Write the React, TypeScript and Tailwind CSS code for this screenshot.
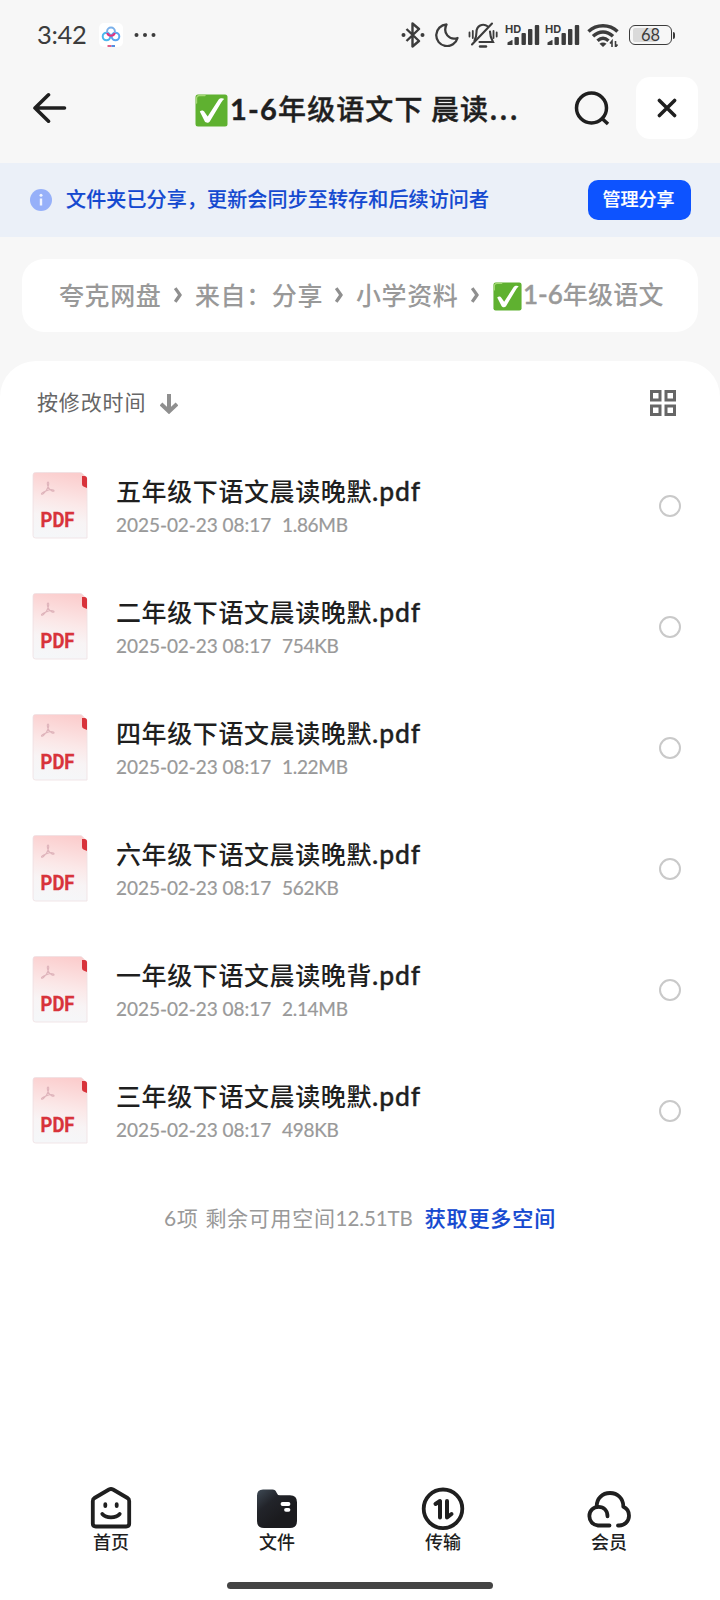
import type { ReactNode } from "react";

type FileItem = {
  name: string;
  date: string;
  size: string;
};

const files: FileItem[] = [
  { name: "五年级下语文晨读晚默", date: "2025-02-23 08:17", size: "1.86MB" },
  { name: "二年级下语文晨读晚默", date: "2025-02-23 08:17", size: "754KB" },
  { name: "四年级下语文晨读晚默", date: "2025-02-23 08:17", size: "1.22MB" },
  { name: "六年级下语文晨读晚默", date: "2025-02-23 08:17", size: "562KB" },
  { name: "一年级下语文晨读晚背", date: "2025-02-23 08:17", size: "2.14MB" },
  { name: "三年级下语文晨读晚默", date: "2025-02-23 08:17", size: "498KB" },
];

const CheckMark = ({ className }: { className: string }) => (
  <svg viewBox="0 0 33 33" className={className}>
    <rect x="0.5" y="0.5" width="32" height="32" rx="2.5" fill="#5fb130" />
    <path d="M1.5 9V4.5a3 3 0 0 1 3-3H10" fill="none" stroke="#a5d975" strokeWidth="1.4" strokeLinecap="round" />
    <path d="M4.8 17.5c1.8-1.7 3.7-1.2 4.7.4l3.2 4.5L23.5 5.8c1.2-1.6 4.3-1.9 5.7-.8-1.3 1-2 2-2.8 3.3L14.8 27.5c-1.2 1.7-4 1.7-5.1-.2z" fill="#fff" />
  </svg>
);

const Signal = () => (
  <div className="relative h-[24px] w-[34px]">
    <span className="absolute -left-px top-px font-['Inter','Liberation_Sans',sans-serif] text-[11px] font-bold leading-[10px] text-[#3c3c3c]">
      HD
    </span>
    <svg viewBox="0 0 34 24" className="h-[24px] w-[34px]" fill="#3c3c3c">
      <path d="M1.5 22v-2.5l4.5-2.500q.5 0 .5.5V22z" />
      <rect x="8.5" y="14" width="4.4" height="8" rx="1" />
      <rect x="15.5" y="10" width="4.4" height="12" rx="1" />
      <rect x="22" y="6" width="4.4" height="16" rx="1" />
      <rect x="28.8" y="2" width="4.4" height="20" rx="1" />
    </svg>
  </div>
);

const StatusBar = () => (
  <div className="flex h-[70px] items-center pl-[37px] pr-[45px] text-[#3c3c3c]">
    <span className="w-[50px] whitespace-nowrap font-['Lato','Liberation_Sans',sans-serif] text-[25.5px] leading-none tracking-[-0.3px]">
      3:42
    </span>
    <svg viewBox="0 0 24 24" className="ml-[12px] h-[24px] w-[24px]">
      <rect width="24" height="24" rx="5" fill="#fff" />
      <circle cx="7.5" cy="13.5" r="3.8" fill="none" stroke="#4db8ee" strokeWidth="2" />
      <circle cx="16.5" cy="13.5" r="3.8" fill="none" stroke="#5aa6f0" strokeWidth="2" />
      <circle cx="12" cy="8.5" r="3.9" fill="none" stroke="#7ab0ea" strokeWidth="2" />
      <path d="M8.2 10a4 4 0 0 0 7.6 0" fill="none" stroke="#e0337e" strokeWidth="2.2" />
      <path d="M8.5 23h4" stroke="#e0507a" strokeWidth="1.8" />
      <path d="M12.5 23h3.5" stroke="#3f80e0" strokeWidth="1.8" />
    </svg>
    <svg viewBox="0 0 22 6" className="ml-[11px] h-[6px] w-[22px]" fill="#3c3c3c">
      <circle cx="2.5" cy="3" r="2" />
      <circle cx="11" cy="3" r="2" />
      <circle cx="19.5" cy="3" r="2" />
    </svg>

    <div className="ml-auto flex items-center">
      <svg viewBox="0 0 24 26" className="h-[26px] w-[24px]" fill="none" stroke="#3c3c3c" strokeWidth="2.4" strokeLinejoin="round">
        <path d="M5.5 7l12.5 12-6.5 5.5V1.5L18 7 5.5 19" />
        <circle cx="2.5" cy="13" r="2" fill="#3c3c3c" stroke="none" />
        <circle cx="21.5" cy="13" r="2" fill="#3c3c3c" stroke="none" />
      </svg>
      <svg viewBox="0 0 24 24" className="ml-[10px] h-[24px] w-[24px]" fill="none" stroke="#3c3c3c" strokeWidth="2.3" strokeLinejoin="round">
        <path d="M11.5 1.5A10.8 10.8 0 1 0 22.5 15C14 17.5 7.5 10 11.5 1.5z" />
      </svg>
      <svg viewBox="0 0 30 26" className="ml-[9px] h-[26px] w-[30px]" fill="none" stroke="#3c3c3c" strokeWidth="2.1" strokeLinecap="round">
        <path d="M20 4.5C14.5.5 8.500 4 8.500 10c0 3.500-.3 5.500-2 8.500" />
        <path d="M22 9.500c0 4 .5 6 3 10.500H11.500" />
        <path d="M24 1.500L4 22.500" />
        <path d="M12 24.500h6" strokeWidth="2.4" />
        <path d="M1.5 10.500v4M4.800 9v7M25.500 9v7M28.700 10.500v4" strokeWidth="1.8" />
      </svg>
      <div className="ml-[8px] flex gap-[6px]">
        <Signal />
        <Signal />
      </div>
      <svg viewBox="0 0 32 24" className="ml-[7px] h-[24px] w-[32px]" fill="none" stroke="#3c3c3c" strokeWidth="3.4">
        <path d="M1.5 8.500C9.500.8 22.500.8 30.500 8.500" />
        <path d="M6 13.200c6-5.700 14-5.700 20 0" />
        <path d="M10.500 17.800c3.500-3.200 7.500-3.200 11 0" />
        <path d="M12.500 20.800c2-1.700 5-1.700 7 0L16 24z" fill="#3c3c3c" stroke="none" />
        <path d="M25 24v-6l-2 2.500M28.500 18v6l2-2.500" strokeWidth="1.6" />
      </svg>
      <div className="relative ml-[10px] h-[20px] w-[43px] rounded-[6px] border-[1.5px] border-[#3c3c3c]">
        <div className="absolute left-[3px] top-[2px] h-[14px] w-[24px] rounded-[2px] bg-[#dadada]" />
        <span className="relative block text-center font-['Lato','Liberation_Sans',sans-serif] text-[16.5px] leading-[18px]">
          68
        </span>
      </div>
      <div className="ml-[1px] h-[7px] w-[2px] rounded-r bg-[#3c3c3c]" />
    </div>
  </div>
);

const Header = () => (
  <div className="flex h-[93px] items-start pl-[33px] pr-[22px] pt-[7px] text-[#1f1f1f]">
    <div className="flex h-[62px] w-full items-center">
      <svg viewBox="0 0 34 32" className="h-[32px] w-[34px]" fill="none" stroke="#1f1f1f" strokeWidth="3.6" strokeLinecap="round" strokeLinejoin="round">
        <path d="M15.5 2.800L2 16l13.500 13.200M2 16h29.500" />
      </svg>
      <div className="ml-[128px] flex w-[326px] items-center">
        <CheckMark className="mt-[4px] h-[33px] w-[33px] shrink-0" />
        <h1 className="ml-[2px] whitespace-nowrap text-[28px] font-medium leading-[40px] tracking-[1.1px] [-webkit-text-stroke:0.4px_#1f1f1f]">
          <span className="font-['Lato'] text-[29px] font-bold tracking-[1.2px]">1-6</span>
          年级语文下 晨读<span className="tracking-[1.8px]">...</span>
        </h1>
      </div>
      <svg viewBox="0 0 36 36" className="ml-[53px] h-[36px] w-[36px]" fill="none" stroke="#1f1f1f" strokeWidth="3.5">
        <circle cx="17.5" cy="18" r="15" />
        <path d="M27.500 28l6.500 6" />
      </svg>
      <div className="ml-auto flex h-[62px] w-[62px] items-center justify-center rounded-[14px] bg-white">
        <svg viewBox="0 0 20 20" className="h-[20px] w-[20px]" stroke="#1f1f1f" strokeWidth="3.5" strokeLinecap="round">
          <path d="M2.400 2.400l15.200 15.200M17.600 2.400L2.400 17.600" />
        </svg>
      </div>
    </div>
  </div>
);

const ShareBanner = () => (
  <div className="flex h-[74px] items-center bg-[#ebf0f8] pl-[30px] pr-[29px]">
    <svg viewBox="0 0 22 22" className="h-[22px] w-[22px]">
      <circle cx="11" cy="11" r="11" fill="#96b0f9" />
      <circle cx="11" cy="6.3" r="1.5" fill="#f0f4ff" />
      <path d="M11 9.500v7" stroke="#f0f4ff" strokeWidth="2.4" />
    </svg>
    <p className="-mt-[2px] ml-[14px] whitespace-nowrap text-[20px] font-medium leading-none tracking-[0.15px] text-[#1449d0] [-webkit-text-stroke:0.15px_#1449d0]">
      文件夹已分享，更新会同步至转存和后续访问者
    </p>
    <button className="ml-auto h-[40px] w-[103px] rounded-[10px] bg-[#0d53ff] pb-[4px] pr-[2px] text-[18px] font-medium text-white [-webkit-text-stroke:0.2px_#fff]">
      管理分享
    </button>
  </div>
);

const Chevron = () => (
  <svg viewBox="0 0 8 16" className="h-[16px] w-[8px] shrink-0" fill="none" stroke="#8f8f8f" strokeWidth="3.2">
    <path d="M1.200 1.200Q4 5 6 8 4 11 1.200 14.800" />
  </svg>
);

const Breadcrumb = () => (
  <div className="mx-[22px] mt-[22px] flex h-[73px] items-center whitespace-nowrap rounded-[22px] bg-white pb-[2px] pl-[37px] text-[25px] font-medium tracking-[0.6px] text-[#999]">
    <span className="w-[102px] shrink-0">夸克网盘</span>
    <span className="ml-[13px]"><Chevron /></span>
    <span className="ml-[13px] w-[128px] shrink-0">来自：分享</span>
    <span className="ml-[12px]"><Chevron /></span>
    <span className="ml-[13px] w-[102px] shrink-0">小学资料</span>
    <span className="ml-[13px]"><Chevron /></span>
    <CheckMark className="ml-[14px] mt-[4px] h-[29px] w-[29px] shrink-0" />
    <span className="ml-[1px] tracking-[0.2px]">
      <span className="font-['Lato'] text-[26px] tracking-normal [-webkit-text-stroke:0.5px_#999]">1-6</span>年级语文
    </span>
  </div>
);

const PdfIcon = () => (
  <svg viewBox="0 0 56 67" className="h-[67px] w-[56px]">
    <defs>
      <linearGradient id="sheet" x1="0.6" y1="0" x2="0.45" y2="1">
        <stop offset="0" stopColor="#fbcdcd" />
        <stop offset="0.45" stopColor="#fbe8e8" />
        <stop offset="0.7" stopColor="#f8f4f5" />
        <stop offset="1" stopColor="#f5f7f9" />
      </linearGradient>
    </defs>
    <path d="M3.5.5H48q1.500 0 2.500 1l4 4q.5.5.5 1.500V66H3.500a2.500 2.500 0 0 1-2.500-2.500V3A2.500 2.500 0 0 1 3.500.5z" fill="url(#sheet)" stroke="#efe0e2" strokeWidth="0.8" />
    <path d="M50 4h2.500a2.500 2.500 0 0 1 2.500 2.500V16l-3.500-1.500A2.500 2.500 0 0 1 50 12z" fill="#d8333b" />
    <path d="M16 10c1.500 0 .5 5-1.500 8s-4.500 5-5 4 4-3 7-4 6 0 5.500 1-4-.5-5.500-3.500S15 10 16 10z" fill="none" stroke="#dfb4bb" strokeWidth="1.1" />
    <text x="8.5" y="55" textLength="34" lengthAdjust="spacingAndGlyphs" fontFamily="Roboto, 'Liberation Sans', sans-serif" fontWeight="700" fontSize="20.5" fill="#d8333b" stroke="#d8333b" strokeWidth="0.3">
      PDF
    </text>
  </svg>
);

const FileRow = ({ file }: { file: FileItem }) => (
  <li className="flex h-[121px] items-center pl-[32px] pr-[39px]">
    <PdfIcon />
    <div className="ml-[28px] pt-px">
      <p className="whitespace-nowrap text-[25px] font-medium leading-[35px] tracking-[0.6px] text-[#1f1f1f]">
        {file.name}
        <span className="font-['Lato'] text-[26.5px] tracking-[0.9px] [-webkit-text-stroke:0.4px_#1f1f1f]">.pdf</span>
      </p>
      <p className="flex whitespace-nowrap pt-px font-['Lato','Liberation_Sans',sans-serif] text-[19px] leading-[30px] tracking-[-0.05px] text-[#999] [-webkit-text-stroke:0.2px_#999]">
        <span className="w-[166px]">{file.date}</span>
        <span className="tracking-[-0.3px]">{file.size}</span>
      </p>
    </div>
    <div className="ml-auto mt-px h-[22px] w-[22px] rounded-full border-2 border-[#c9c9c9]" />
  </li>
);

const NavItem = ({ label, children }: { label: string; children: ReactNode }) => (
  <div className="flex w-[166px] flex-col items-center">
    <svg viewBox="0 0 44 44" className="-mt-px h-[44px] w-[44px]" fill="none" stroke="#1f1f1f" strokeWidth="3.8" strokeLinecap="round" strokeLinejoin="round">
      {children}
    </svg>
    <span className="-mt-px text-[18px] font-medium leading-[24px] text-[#1f1f1f]">{label}</span>
  </div>
);

const BottomNav = () => (
  <nav className="mt-auto flex h-[82px] justify-center">
    <NavItem label="首页">
      <path d="M20 3.500L5.500 12Q3.800 13 3.800 15v22.500q0 3 3 3h30.400q3 0 3-3V15q0-2-1.700-3L24 3.500q-2-1-4 0z" />
      <path d="M16.300 18.200v1.800M27.700 18.200v1.800" />
      <path d="M13.300 28c4 4.500 13.400 4.500 17.400 0" />
    </NavItem>
    <NavItem label="文件">
      <defs>
        <linearGradient id="folder" x1="0" y1="0" x2="0.6" y2="0.7">
          <stop offset="0" stopColor="#3f4a55" />
          <stop offset="0.5" stopColor="#22242a" />
          <stop offset="1" stopColor="#1b1b1e" />
        </linearGradient>
      </defs>
      <path d="M8 3.500h9.500q3 0 4 3 .7 2.700 3.500 2.700h10q7 0 7 7V35q0 7-7 7H9q-7 0-7-7V9.500q0-6 6-6z" fill="url(#folder)" stroke="none" />
      <path d="M27.500 18h6M31 23.800h2.500" stroke="#fff" />
    </NavItem>
    <NavItem label="传输">
      <circle cx="22" cy="22.8" r="19.3" />
      <path d="M14.500 18l4.500-3v16.500M26 15v16.500l4.500-3.500" strokeWidth="4" />
    </NavItem>
    <NavItem label="会员">
      <path d="M22.500 39.500H11a9.300 9.300 0 0 1-8.600-9.700c0-5 4-9 9.100-9 5.500 0 9 4 9 9.500" />
      <path d="M9.800 21C9.200 12.500 15.500 7 23 7s13.500 5.500 13.300 13.700c3.700 1.500 5.700 5 5.700 9 0 5.300-4.300 9.800-9.800 9.800H31" />
    </NavItem>
  </nav>
);

const App = () => {
  return (
    <div className="flex h-[1600px] w-[720px] flex-col overflow-hidden bg-[#f7f7f7] font-['Noto_Sans_CJK_SC',sans-serif]">
      <StatusBar />
      <Header />
      <ShareBanner />
      <Breadcrumb />
      <main className="mt-[29px] flex flex-1 flex-col rounded-t-[36px] bg-white">
        <div className="flex h-[84px] items-center pl-[37px] pr-[43px]">
          <span className="-mt-[4px] text-[21px] leading-none tracking-[0.85px] text-[#666]">按修改时间</span>
          <svg viewBox="0 0 18 20" className="ml-[14px] mt-[2px] h-[20px] w-[18px]" fill="none" stroke="#8f8f8f" strokeWidth="4">
            <path d="M9 0v17M1 10l8 7.500 8-7.500" />
          </svg>
          <svg viewBox="0 0 28 28" className="ml-auto h-[28px] w-[28px]" fill="none" stroke="#666" strokeWidth="3">
            <rect x="2.5" y="2.5" width="8.5" height="8.5" />
            <rect x="17" y="2.5" width="8.5" height="8.5" />
            <rect x="2.5" y="17" width="8.5" height="8.5" />
            <rect x="17" y="17" width="8.5" height="8.5" />
          </svg>
        </div>
        <ul>
          {files.map((file) => (
            <FileRow key={file.name} file={file} />
          ))}
        </ul>
        <div className="mt-[30px] flex justify-center gap-[12px] whitespace-nowrap text-[21px] leading-[32px] tracking-[0.7px]">
          <span className="text-[#999]">
            <span className="font-['Lato']">6</span>项 <span className="ml-[1.5px]">剩余可用空间</span>
            <span className="font-['Lato'] text-[20.5px] tracking-[-0.1px]">12.51TB</span>
          </span>
          <a href="#" className="font-medium tracking-[0.9px] text-[#1449d0] [-webkit-text-stroke:0.2px_#1449d0]">获取更多空间</a>
        </div>
        <BottomNav />
        <div className="mx-auto mb-[11px] mt-[13px] h-[7px] w-[266px] rounded-full bg-[#444]" />
      </main>
    </div>
  );
};

export default App;
